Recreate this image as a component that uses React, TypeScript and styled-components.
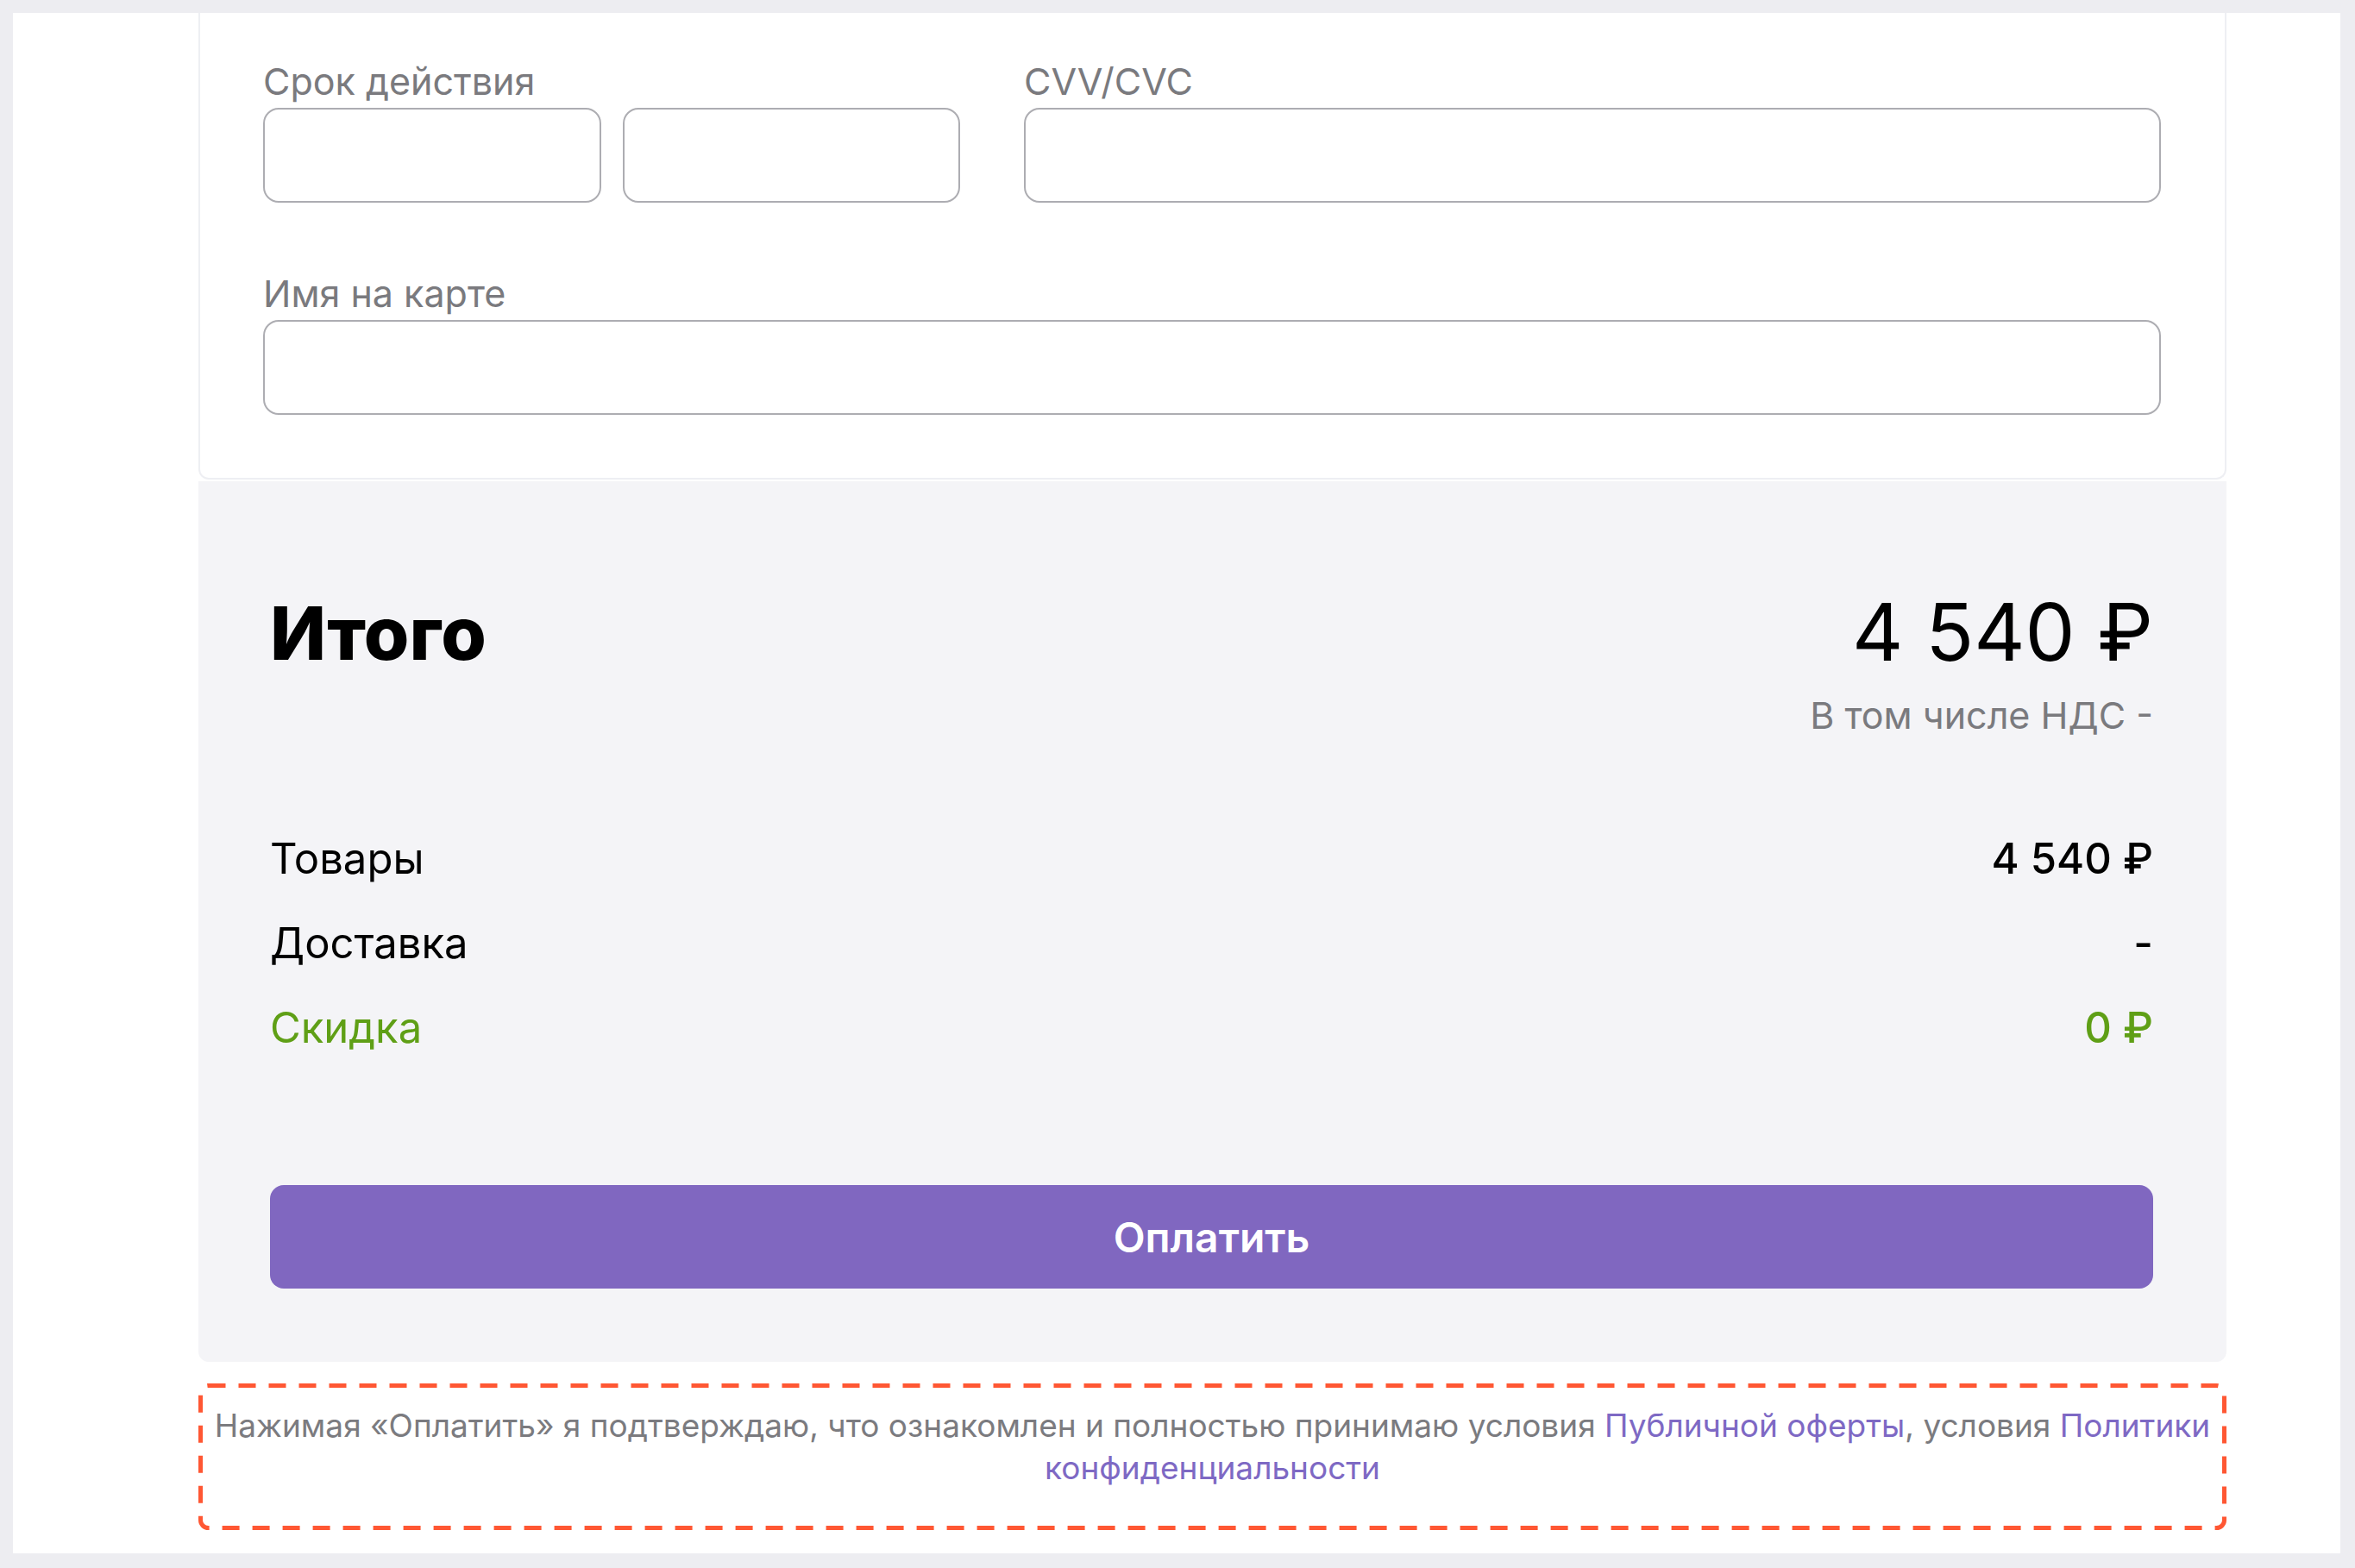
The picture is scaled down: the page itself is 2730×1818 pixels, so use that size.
import React from 'react';
import styled, { createGlobalStyle } from 'styled-components';

const GlobalStyle = createGlobalStyle`
  html, body {
    margin: 0;
    padding: 0;
    background-color: #ededf1;
    font-family: Inter, "Noto Sans", sans-serif;
  }
  * {
    box-sizing: border-box;
  }
`;

const Page = styled.div`
  padding: 15px 17px 18px 15px;
`;

const Sheet = styled.div`
  background-color: #ffffff;
  padding: 0 0 27px 215px;
`;

const Column = styled.div`
  width: 2351px;
  display: flex;
  flex-direction: column;
`;

const CardForm = styled.div`
  background-color: #ffffff;
  border: 2px solid #eeeff3;
  border-top: none;
  border-radius: 0 0 12px 12px;
  padding: 54px 74px 73px 73px;
  display: flex;
  flex-direction: column;
  gap: 80px;
`;

const FieldRow = styled.div`
  display: grid;
  grid-template-columns: 808px 1fr;
  column-gap: 74px;
`;

const Field = styled.div`
  display: flex;
  flex-direction: column;
`;

const Label = styled.label`
  font-size: 43px;
  line-height: 50px;
  color: #7a7a7e;
  margin-bottom: 6px;
`;

const Pair = styled.div`
  display: flex;
  gap: 25px;
`;

const Input = styled.input`
  width: 100%;
  height: 110px;
  border: 2px solid #adadb2;
  border-radius: 18px;
  background: #ffffff;
  font-family: inherit;
  font-size: 42px;
  padding: 0 28px;
  outline: none;
`;

const Summary = styled.div`
  margin-top: 2px;
  background-color: #f4f4f7;
  border-radius: 0 0 12px 12px;
  padding: 120px 85px 85px 83px;
  display: flex;
  flex-direction: column;
`;

const TotalRow = styled.div`
  display: flex;
  justify-content: space-between;
  align-items: flex-start;
`;

const TotalTitle = styled.h2`
  margin: 6px 0 0;
  font-size: 85px;
  line-height: 1.2;
  font-weight: 800;
  color: #000000;
`;

const TotalAmount = styled.div`
  display: flex;
  flex-direction: column;
  align-items: flex-end;
`;

const BigPrice = styled.div`
  font-size: 92px;
  line-height: 1.2;
  color: #000000;
`;

const VatNote = styled.div`
  margin-top: 16px;
  font-size: 43px;
  line-height: 1.2;
  color: #7a7a7e;
`;

const Lines = styled.div`
  margin-top: 111px;
  display: flex;
  flex-direction: column;
  gap: 39px;
`;

const Line = styled.div<{ $accent?: boolean }>`
  display: flex;
  justify-content: space-between;
  font-size: 49px;
  line-height: 1.2;
  color: ${(p) => (p.$accent ? '#5f9f16' : '#000000')};
`;

const LineValue = styled.span`
  font-weight: 500;
`;

const PayButton = styled.button`
  margin-top: 153px;
  height: 120px;
  width: 100%;
  border: none;
  border-radius: 16px;
  background-color: #8067c0;
  color: #ffffff;
  font-family: inherit;
  font-size: 48px;
  font-weight: 600;
  cursor: pointer;
`;

const Notice = styled.div`
  position: relative;
  margin-top: 25px;
  padding: 24px 14px 48px;
  text-align: center;
  font-size: 37px;
  line-height: 49px;
  color: #7b7b7f;
`;

const DashedFrame = styled.svg`
  position: absolute;
  inset: 0;
  width: 100%;
  height: 100%;
  pointer-events: none;

  rect {
    x: 2.5px;
    y: 2.5px;
    width: calc(100% - 5px);
    height: calc(100% - 5px);
    rx: 9px;
    fill: none;
    stroke: #ff5733;
    stroke-width: 5px;
    stroke-dasharray: 20 15;
  }
`;

const Link = styled.a`
  color: #7e69c4;
  text-decoration: none;
`;

export default function App() {
  return (
    <>
      <GlobalStyle />
      <Page>
        <Sheet>
          <Column>
            <CardForm>
              <FieldRow>
                <Field>
                  <Label>Срок действия</Label>
                  <Pair>
                    <Input />
                    <Input />
                  </Pair>
                </Field>
                <Field>
                  <Label>CVV/CVC</Label>
                  <Input />
                </Field>
              </FieldRow>
              <Field>
                <Label>Имя на карте</Label>
                <Input />
              </Field>
            </CardForm>

            <Summary>
              <TotalRow>
                <TotalTitle>Итого</TotalTitle>
                <TotalAmount>
                  <BigPrice>4 540 ₽</BigPrice>
                  <VatNote>В том числе НДС -</VatNote>
                </TotalAmount>
              </TotalRow>
              <Lines>
                <Line>
                  <span>Товары</span>
                  <LineValue>4 540 ₽</LineValue>
                </Line>
                <Line>
                  <span>Доставка</span>
                  <LineValue>-</LineValue>
                </Line>
                <Line $accent>
                  <span>Скидка</span>
                  <LineValue>0 ₽</LineValue>
                </Line>
              </Lines>
              <PayButton>Оплатить</PayButton>
            </Summary>

            <Notice>
              <DashedFrame aria-hidden="true">
                <rect />
              </DashedFrame>
              Нажимая «Оплатить» я подтверждаю, что ознакомлен и полностью принимаю условия{' '}
              <Link href="#">Публичной оферты</Link>, условия <Link href="#">Политики конфиденциальности</Link>
            </Notice>
          </Column>
        </Sheet>
      </Page>
    </>
  );
}
